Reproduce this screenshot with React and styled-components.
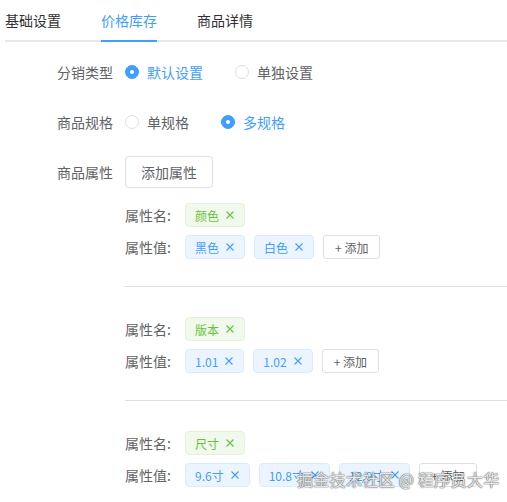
import React, { useState } from 'react';
import styled, { createGlobalStyle } from 'styled-components';

const GlobalStyle = createGlobalStyle`
  body {
    margin: 0;
    background: #fff;
    font-family: "Noto Sans CJK SC", "Noto Sans", sans-serif;
  }
`;

const Page = styled.div`
  position: relative;
  width: 507px;
  height: 502px;
  overflow: hidden;
  padding-left: 5px;
  box-sizing: border-box;
`;

const TabBar = styled.div`
  display: flex;
  height: 42px;
  border-bottom: 2px solid #e4e7ed;
  box-sizing: border-box;
`;

const Tab = styled.div`
  position: relative;
  padding: 0 20px;
  line-height: 40px;
  font-size: 14px;
  color: ${p => (p.$active ? '#409eff' : '#303133')};
  &:first-child { padding-left: 0; }
  &::after {
    content: '';
    display: ${p => (p.$active ? 'block' : 'none')};
    position: absolute;
    left: ${p => (p.$first ? '0' : '20px')};
    right: 20px;
    bottom: -2px;
    height: 2px;
    background: #409eff;
  }
`;

const Form = styled.div`
  display: flex;
  flex-direction: column;
  gap: 18px;
  padding-top: 14px;
`;

const FormItem = styled.div`
  display: flex;
  align-items: flex-start;
`;

const Label = styled.div`
  width: 120px;
  flex-shrink: 0;
  padding-right: 12px;
  box-sizing: border-box;
  text-align: right;
  line-height: 32px;
  font-size: 14px;
  color: #606266;
`;

const Content = styled.div`
  flex: 1;
  min-height: 32px;
  display: flex;
  flex-direction: column;
`;

const RadioGroup = styled.div`
  display: flex;
  align-items: center;
  height: 32px;
  gap: 32px;
`;

const Radio = styled.label`
  display: flex;
  align-items: center;
  gap: 8px;
  font-size: 14px;
  color: ${p => (p.$checked ? '#409eff' : '#606266')};
  cursor: pointer;
`;

const Dot = styled.span`
  width: 14px;
  height: 14px;
  border-radius: 50%;
  box-sizing: border-box;
  border: 1px solid ${p => (p.$checked ? '#409eff' : '#dcdfe6')};
  background: ${p => (p.$checked ? '#409eff' : '#fff')};
  display: flex;
  align-items: center;
  justify-content: center;
  &::after {
    content: '';
    width: 4px;
    height: 4px;
    border-radius: 50%;
    background: #fff;
    display: ${p => (p.$checked ? 'block' : 'none')};
  }
`;

const Button = styled.button`
  height: 32px;
  padding: 0 15px;
  border: 1px solid #dcdfe6;
  border-radius: 4px;
  background: #fff;
  color: #606266;
  font-size: 14px;
  font-family: inherit;
  align-self: flex-start;
  cursor: pointer;
`;

const AttrList = styled.div`
  display: flex;
  flex-direction: column;
  margin-top: 15px;
`;

const AttrGroup = styled.div`
  display: flex;
  flex-direction: column;
  gap: 8px;
  padding: 30px 0 27px;
  border-bottom: ${p => (p.$last ? 'none' : '1px solid #dcdfe6')};
  &:first-child { padding-top: 0; }
`;

const AttrRow = styled.div`
  display: flex;
  align-items: center;
  gap: 9px;
`;

const AttrLabel = styled.span`
  width: 51px;
  font-size: 14px;
  color: #606266;
`;

const Tag = styled.span`
  display: inline-flex;
  align-items: center;
  height: 24px;
  padding: 0 8px 0 9px;
  box-sizing: border-box;
  border-radius: 4px;
  font-size: 12px;
  gap: 5px;
  color: ${p => (p.$green ? '#67c23a' : '#409eff')};
  background: ${p => (p.$green ? '#f0f9eb' : '#ecf5ff')};
  border: 1px solid ${p => (p.$green ? '#e1f3d8' : '#d9ecff')};
`;

const Close = styled.svg`
  width: 12px;
  height: 12px;
`;

const SmallButton = styled.button`
  height: 24px;
  padding: 0 11px;
  border: 1px solid #dcdfe6;
  border-radius: 3px;
  background: #fff;
  color: #606266;
  font-size: 12px;
  font-family: inherit;
  cursor: pointer;
`;

const Watermark = styled.div`
  position: absolute;
  left: 297px;
  top: 467px;
  font-size: 16px;
  color: rgba(255, 255, 255, 0.85);
  text-shadow: 0 0 1px #666, 0 0 1px #666, 0 0 2px rgba(0,0,0,0.35);
  letter-spacing: 0.3px;
  white-space: nowrap;
  pointer-events: none;
`;

const attrs = [
  { name: '颜色', values: ['黑色', '白色'] },
  { name: '版本', values: ['1.01', '1.02'] },
  { name: '尺寸', values: ['9.6寸', '10.8寸', '12.9寸'] },
];

const X = () => (
  <Close viewBox="0 0 12 12">
    <path d="M2.5 2.5 L9.5 9.5 M9.5 2.5 L2.5 9.5" stroke="currentColor" strokeWidth="1.1" fill="none" />
  </Close>
);

const RadioItem = ({ checked, children, onClick }) => (
  <Radio $checked={checked} onClick={onClick}>
    <Dot $checked={checked} />
    {children}
  </Radio>
);

const App = () => {
  const [dist, setDist] = useState('default');
  const [spec, setSpec] = useState('multi');
  const tabs = ['基础设置', '价格库存', '商品详情'];

  return (
    <Page>
      <GlobalStyle />
      <TabBar>
        {tabs.map((t, i) => (
          <Tab key={t} $active={i === 1} $first={i === 0}>{t}</Tab>
        ))}
      </TabBar>
      <Form>
        <FormItem>
          <Label>分销类型</Label>
          <RadioGroup>
            <RadioItem checked={dist === 'default'} onClick={() => setDist('default')}>默认设置</RadioItem>
            <RadioItem checked={dist === 'single'} onClick={() => setDist('single')}>单独设置</RadioItem>
          </RadioGroup>
        </FormItem>
        <FormItem>
          <Label>商品规格</Label>
          <RadioGroup>
            <RadioItem checked={spec === 'single'} onClick={() => setSpec('single')}>单规格</RadioItem>
            <RadioItem checked={spec === 'multi'} onClick={() => setSpec('multi')}>多规格</RadioItem>
          </RadioGroup>
        </FormItem>
        <FormItem>
          <Label>商品属性</Label>
          <Content>
            <Button>添加属性</Button>
            <AttrList>
              {attrs.map((a, i) => (
                <AttrGroup key={a.name} $last={i === attrs.length - 1}>
                  <AttrRow>
                    <AttrLabel>属性名:</AttrLabel>
                    <Tag $green>{a.name}<X /></Tag>
                  </AttrRow>
                  <AttrRow>
                    <AttrLabel>属性值:</AttrLabel>
                    {a.values.map(v => (
                      <Tag key={v}>{v}<X /></Tag>
                    ))}
                    <SmallButton>+ 添加</SmallButton>
                  </AttrRow>
                </AttrGroup>
              ))}
            </AttrList>
          </Content>
        </FormItem>
      </Form>
      <Watermark>掘金技术社区 @ 程序员大华</Watermark>
    </Page>
  );
};

export default App;
